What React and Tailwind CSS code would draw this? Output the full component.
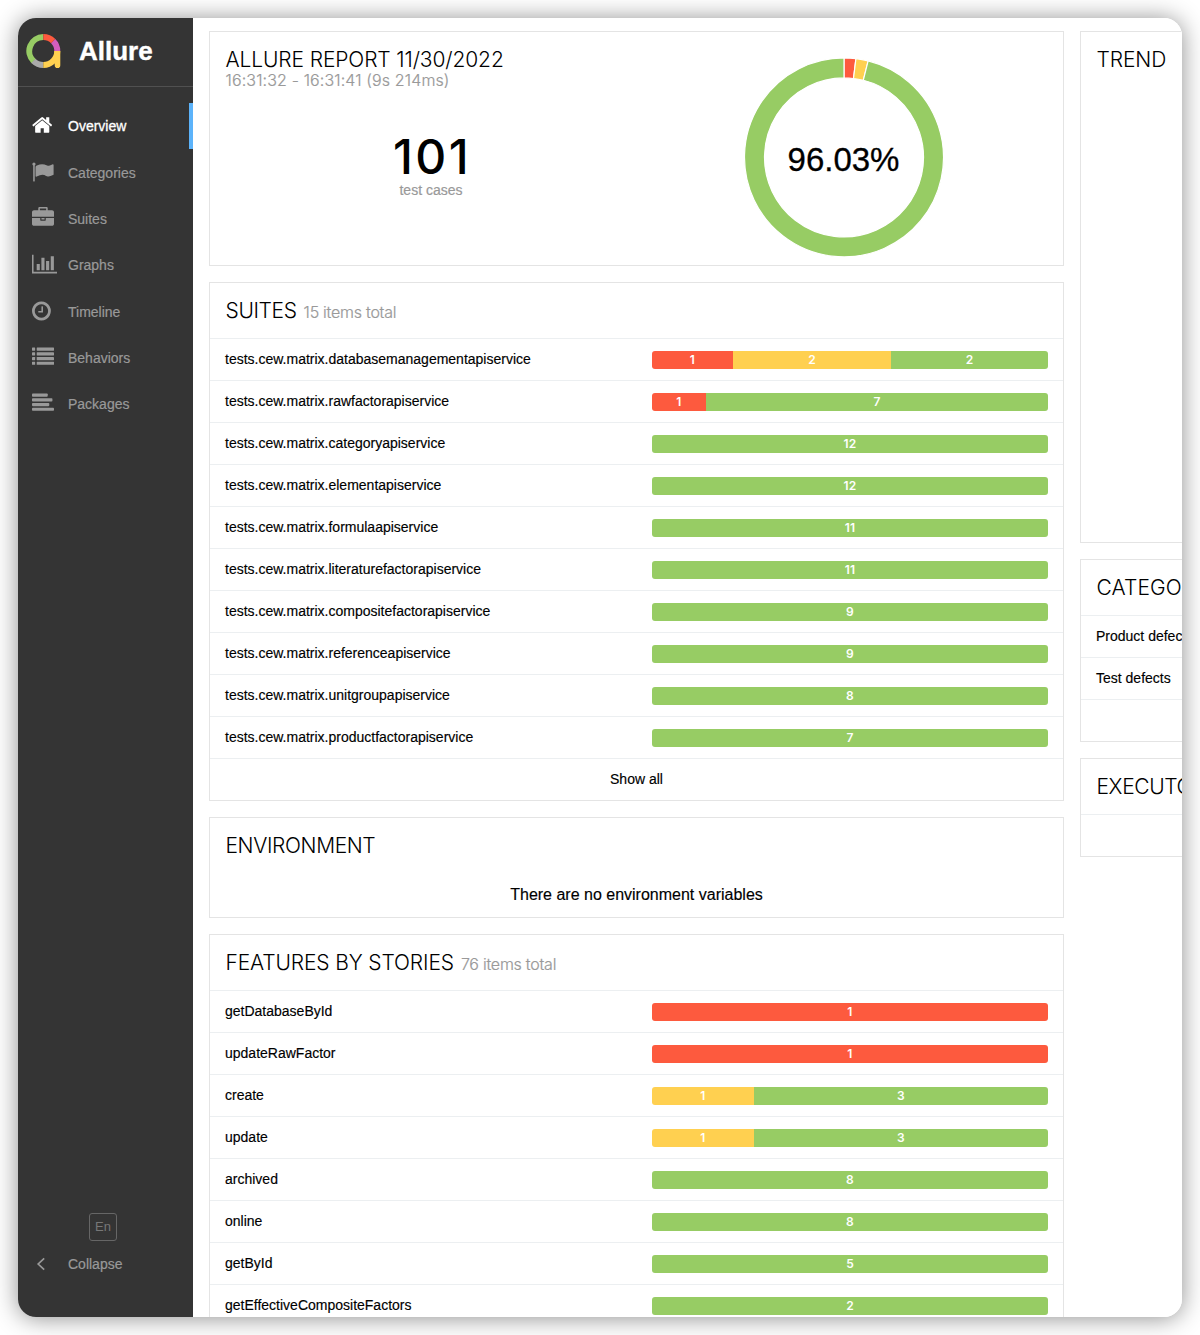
import React from "react";

const RED = "bg-[#fd5a3e]";
const YELLOW = "bg-[#ffd050]";
const GREEN = "bg-[#97cc64]";

const suites = [
  ["tests.cew.matrix.databasemanagementapiservice", [[1, RED, 81], [2, YELLOW, 158], [2, GREEN, 157]]],
  ["tests.cew.matrix.rawfactorapiservice", [[1, RED, 54], [7, GREEN, 342]]],
  ["tests.cew.matrix.categoryapiservice", [[12, GREEN, 396]]],
  ["tests.cew.matrix.elementapiservice", [[12, GREEN, 396]]],
  ["tests.cew.matrix.formulaapiservice", [[11, GREEN, 396]]],
  ["tests.cew.matrix.literaturefactorapiservice", [[11, GREEN, 396]]],
  ["tests.cew.matrix.compositefactorapiservice", [[9, GREEN, 396]]],
  ["tests.cew.matrix.referenceapiservice", [[9, GREEN, 396]]],
  ["tests.cew.matrix.unitgroupapiservice", [[8, GREEN, 396]]],
  ["tests.cew.matrix.productfactorapiservice", [[7, GREEN, 396]]],
];

const features = [
  ["getDatabaseById", [[1, RED, 396]]],
  ["updateRawFactor", [[1, RED, 396]]],
  ["create", [[1, YELLOW, 102], [3, GREEN, 294]]],
  ["update", [[1, YELLOW, 102], [3, GREEN, 294]]],
  ["archived", [[8, GREEN, 396]]],
  ["online", [[8, GREEN, 396]]],
  ["getById", [[5, GREEN, 396]]],
  ["getEffectiveCompositeFactors", [[2, GREEN, 396]]],
];

const HOME =
  "M1472 992v480q0 26-19 45t-45 19h-384v-384h-256v384h-384q-26 0-45-19t-19-45v-480q0-1 .5-3t.5-3l575-474 575 474q1 2 1 6zm223-69l-62 74q-8 9-21 11h-3q-13 0-21-7l-692-577-692 577q-12 8-24 7-13-2-21-11l-62-74q-8-10-7-23.5t11-21.5l719-599q32-26 76-26t76 26l244 204v-195q0-14 9-23t23-9h192q14 0 23 9t9 23v408l219 182q10 8 11 21.5t-7 23.5z";
const FLAG =
  "M320 256q0 72-64 110v1266q0 13-9.5 22.5t-22.5 9.5h-64q-13 0-22.5-9.5t-9.5-22.5v-1266q-64-38-64-110 0-53 37.5-90.5t90.5-37.5 90.5 37.5 37.5 90.5zm1472 64v763q0 25-12.5 38.5t-39.5 27.5q-215 116-369 116-61 0-123.5-22t-108.5-48-115.5-48-142.5-22q-192 0-464 146-17 9-33 9-26 0-45-19t-19-45v-742q0-32 31-55 21-14 79-43 236-120 421-120 107 0 200 29t219 88q38 19 88 19 54 0 117.5-21t110-47 88-47 54.5-21q26 0 45 19t19 45z";
const BRIEFCASE =
  "M640 256h512v-128h-512v128zm1152 640v480q0 66-47 113t-113 47h-1472q-66 0-113-47t-47-113v-480h672v160q0 26 19 45t45 19h320q26 0 45-19t19-45v-160h672zm-768 0v128h-256v-128h256zm768-480v384h-1792v-384q0-66 47-113t113-47h352v-160q0-40 28-68t68-28h576q40 0 68 28t28 68v160h352q66 0 113 47t47 113z";
const CHART =
  "M640 896v512h-256v-512h256zm384-512v1024h-256v-1024h256zm1024 1152v128h-2048v-1536h128v1408h1920zm-640-896v768h-256v-768h256zm384-384v1152h-256v-1152h256z";
const CLOCK =
  "M1024 544v448q0 14-9 23t-23 9h-320q-14 0-23-9t-9-23v-64q0-14 9-23t23-9h224v-352q0-14 9-23t23-9h64q14 0 23 9t9 23zm416 352q0-148-73-273t-198-198-273-73-273 73-198 198-73 273 73 273 198 198 273 73 273-73 198-198 73-273zm224 0q0 209-103 385.5t-279.5 279.5-385.5 103-385.5-103-279.5-279.5-103-385.5 103-385.5 279.5-279.5 385.5-103 385.5 103 279.5 279.5 103 385.5z";

const ROWS_Y = [128, 512, 896, 1280];

function Glyph({ box = "0 0 1792 1792", width = "w-[22px]", children }) {
  return (
    <svg viewBox={box} className={`h-[22px] ${width} shrink-0 fill-current`}>
      {children}
    </svg>
  );
}

const nav = [
  ["Overview", <Glyph box="64 0 1792 1792"><path d={HOME} /></Glyph>],
  ["Categories", <Glyph box="32 0 1792 1792"><path d={FLAG} /></Glyph>],
  ["Suites", <Glyph><path d={BRIEFCASE} /></Glyph>],
  ["Graphs", <Glyph box="0 0 2048 1792" width="w-[25px]"><path d={CHART} /></Glyph>],
  ["Timeline", <Glyph box="128 0 1792 1792"><path d={CLOCK} /></Glyph>],
  [
    "Behaviors",
    <Glyph>
      {ROWS_Y.map((y) => (
        <g key={y}>
          <rect x="0" y={y} width="256" height="256" rx="32" />
          <rect x="384" y={y} width="1408" height="256" rx="32" />
        </g>
      ))}
    </Glyph>,
  ],
  [
    "Packages",
    <Glyph>
      {ROWS_Y.map((y, i) => (
        <rect key={y} x="0" y={y} width={[1280, 1664, 1408, 1792][i]} height="256" rx="64" />
      ))}
    </Glyph>,
  ],
];

function Logo() {
  return (
    <svg viewBox="0 0 36 36" className="h-9 w-9 shrink-0" fill="none" strokeWidth="6">
      <path d="M7.6 27.1A14 14 0 0 1 17.3 3" stroke="#97cc64" />
      <path d="M17.3 3A14 14 0 0 1 27.2 7.1" stroke="#fd5a3e" />
      <path d="M27.2 7.1A14 14 0 0 1 31.3 17" stroke="#d35ebe" />
      <path d="M17.3 31A14 14 0 0 1 7.4 26.9" stroke="#aaaaaa" />
      <path d="M31.3 17A14 14 0 0 1 17.3 31" stroke="#ffd050" />
      <path d="M28.3 17h6v14.2a2.8 2.8 0 0 1-5.6 0z" fill="#ffd050" stroke="none" />
    </svg>
  );
}

function Sidebar() {
  return (
    <aside className="flex w-[175px] shrink-0 flex-col bg-[#343434] text-sm text-[#999]">
      <div className="flex h-[69px] items-center gap-[17px] border-b border-[#505050] pl-2">
        <Logo />
        <span className="pb-[3px] text-[26px] font-bold leading-none text-white [-webkit-text-stroke:0.4px_white]">Allure</span>
      </div>
      <nav className="pt-4">
        {nav.map(([label, icon], i) => (
          <div
            key={label}
            className={`flex h-[46.3px] items-center pl-[14px] ${
              i === 0 ? "border-r-4 border-[#5cb3fa] text-white" : ""
            }`}
          >
            <span className="w-9 shrink-0 pb-[1.5px]">{icon}</span>
            <span className={i === 0 ? "[-webkit-text-stroke:0.3px_white]" : "pt-[0.8px] [-webkit-text-stroke:0.2px_#999]"}>
              {label}
            </span>
          </div>
        ))}
      </nav>
      <div className="mt-auto pb-[43px]">
        <div className="ml-[71px] flex h-7 w-7 items-center justify-center rounded-[3px] border border-[#666] text-[13px] text-[#777]">
          En
        </div>
        <div className="mt-[13px] flex h-5 items-center pl-[18px]">
          <svg viewBox="0 0 10 14" className="mr-[22px] h-[14px] w-[10px]" fill="none" stroke="#999" strokeWidth="1.7">
            <path d="M8.2 1.4L2.2 7l6 5.6" />
          </svg>
          <span className="[-webkit-text-stroke:0.2px_#999]">Collapse</span>
        </div>
      </div>
    </aside>
  );
}

function Card({ className = "", children }) {
  return <section className={`shrink-0 border border-[#e4e4e4] bg-white ${className}`}>{children}</section>;
}

function Title({ text, note, tracking = "tracking-[-0.38px]" }) {
  return (
    <div className="flex h-14 items-baseline gap-[7px] whitespace-nowrap pl-[15.5px] pt-[14px] font-['Inter',sans-serif] font-light">
      <h2 className={`text-[21px] leading-7 ${tracking}`}>{text}</h2>
      {note && (
        <span className="text-base tracking-[-0.25px] text-[#999] [-webkit-text-stroke:0.2px_#999]">{note}</span>
      )}
    </div>
  );
}

function Row({ name, bars }) {
  return (
    <div className="flex h-[42px] items-center justify-between border-t border-[#eceff1] px-[15px] text-sm">
      <span className="whitespace-nowrap pb-0.5 [-webkit-text-stroke:0.15px_black]">{name}</span>
      {bars && (
        <div className="mt-px flex h-[18px] w-[396px] overflow-hidden rounded-[3px] font-['Inter',sans-serif] text-xs font-semibold tracking-[0.2px] text-white">
          {bars.map(([n, color, w], i) => (
            <div key={i} className={`flex items-center justify-center ${color}`} style={{ width: w }}>
              {n}
            </div>
          ))}
        </div>
      )}
    </div>
  );
}

function arc(start, end) {
  const p = (a, r) => `${100 + r * Math.sin(a)} ${100 - r * Math.cos(a)}`;
  const big = end - start > Math.PI ? 1 : 0;
  return `M${p(start, 99.5)}A99.5 99.5 0 ${big} 1 ${p(end, 99.5)}L${p(end, 79.5)}A79.5 79.5 0 ${big} 0 ${p(start, 79.5)}Z`;
}

function Donut() {
  const turn = Math.PI * 2;
  return (
    <div className="grid h-[200px] w-[200px] place-items-center">
      <svg viewBox="0 -0.4 200 200" className="col-start-1 row-start-1 h-[200px] w-[200px] overflow-visible" stroke="#fff" strokeWidth="1.2">
        <path d={arc(0, 0.12)} fill="#fd5a3e" />
        <path d={arc(0.12, 0.245)} fill="#ffd050" />
        <path d={arc(0.245, turn)} fill="#97cc64" />
      </svg>
      <span className="col-start-1 row-start-1 pr-px pt-1 text-[33px] leading-none [-webkit-text-stroke:0.3px_black]">96.03%</span>
    </div>
  );
}

function Summary() {
  return (
    <Card className="flex h-[235px]">
      <div className="w-[442px] pt-[14px]">
        <div className="whitespace-nowrap pl-[15.5px] font-['Inter',sans-serif] font-light">
          <h2 className="text-[21px] leading-7 tracking-[-0.12px]">ALLURE REPORT 11/30/2022</h2>
          <p className="-mt-1 text-base leading-5 tracking-[0.13px] text-[#999] [-webkit-text-stroke:0.2px_#999]">
            16:31:32 - 16:31:41 (9s 214ms)
          </p>
        </div>
        <div className="mt-[45px] text-center">
          <div className="pl-0.5 font-['Inter',sans-serif] text-[48px] font-medium leading-[44px] tracking-[2.4px]">101</div>
          <div className="pt-px text-sm text-[#999] [-webkit-text-stroke:0.2px_#999]">test cases</div>
        </div>
      </div>
      <div className="ml-[92px] mt-[25px]">
        <Donut />
      </div>
    </Card>
  );
}

export default function App() {
  return (
    <div className="h-[1335px] w-[1200px] overflow-hidden bg-white p-[18px] font-['Liberation_Sans',Arial,sans-serif] text-black antialiased">
      <div className="h-[1299px] w-[1164px] rounded-[18px] shadow-[0_1px_24px_rgba(0,0,0,0.45)]">
        <div className="flex h-full overflow-hidden rounded-[18px] bg-white">
          <Sidebar />
          <main className="flex min-w-0 flex-1 gap-4 overflow-hidden pl-4 pt-[13px]">
            <div className="flex w-[855px] shrink-0 flex-col gap-4">
              <Summary />
              <Card>
                <Title text="SUITES" note="15 items total" />
                <div className="-mt-px">
                  {suites.map(([n, b]) => (
                    <Row key={n} name={n} bars={b} />
                  ))}
                  <div className="flex h-[42px] items-center justify-center border-t border-[#eceff1] pb-0.5 text-sm [-webkit-text-stroke:0.15px_black]">
                    Show all
                  </div>
                </div>
              </Card>
              <Card className="h-[101px]">
                <Title text="ENVIRONMENT" />
                <p className="mt-[9px] text-center text-base [-webkit-text-stroke:0.15px_black]">There are no environment variables</p>
              </Card>
              <Card>
                <Title text="FEATURES BY STORIES" note="76 items total" tracking="tracking-[-0.14px]" />
                <div className="-mt-px">
                  {features.map(([n, b]) => (
                    <Row key={n} name={n} bars={b} />
                  ))}
                </div>
              </Card>
            </div>
            <div className="flex w-[855px] shrink-0 flex-col gap-4">
              <Card className="h-[512px]">
                <Title text="TREND" tracking="tracking-[-0.1px]" />
              </Card>
              <Card>
                <Title text="CATEGORIES" tracking="tracking-[0.1px]" />
                <div className="-mt-px">
                  <Row name="Product defects" />
                  <Row name="Test defects" />
                  <Row />
                </div>
              </Card>
              <Card>
                <Title text="EXECUTORS" />
                <div className="-mt-px">
                  <Row />
                </div>
              </Card>
            </div>
          </main>
        </div>
      </div>
    </div>
  );
}
